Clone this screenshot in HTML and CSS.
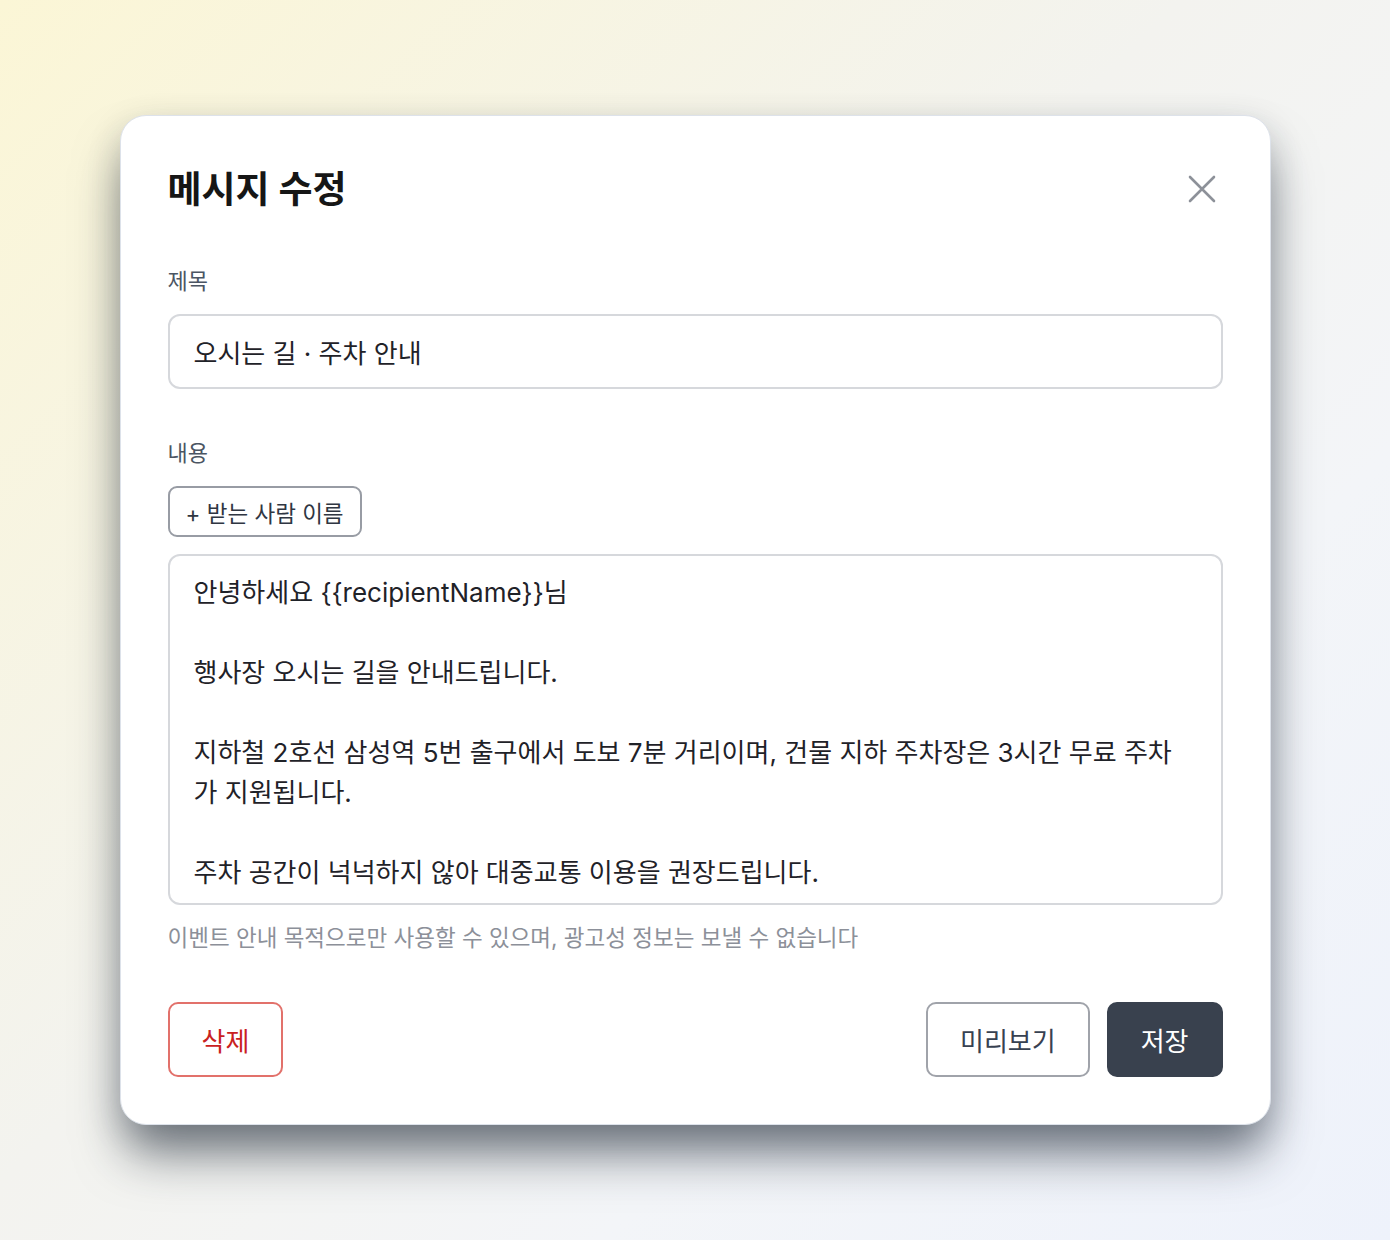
FILE: index.html
```html
<!DOCTYPE html>
<html lang="ko">
<head>
<meta charset="utf-8">
<title>메시지 수정</title>
<link rel="stylesheet" href="styles.css">
</head>
<body>
<div class="modal">
  <div class="modal-header">
    <h2 class="modal-title">메시지 수정</h2>
    <button class="close-btn" aria-label="닫기">
      <svg width="28" height="28" viewBox="0 0 28 28"><path d="M2 2 L26 26 M26 2 L2 26" stroke="#8d9199" stroke-width="2.6" stroke-linecap="round" fill="none"/></svg>
    </button>
  </div>
  <div class="field">
    <div class="label">제목</div>
    <div class="input">오시는 길 · 주차 안내</div>
  </div>
  <div class="field field-body">
    <div class="label">내용</div>
    <button class="chip-btn">+ 받는 사람 이름</button>
    <div class="textarea">안녕하세요 {{recipientName}}님

행사장 오시는 길을 안내드립니다.

지하철 2호선 삼성역 5번 출구에서 도보 7분 거리이며, 건물 지하 주차장은 3시간 무료 주차가 지원됩니다.

주차 공간이 넉넉하지 않아 대중교통 이용을 권장드립니다.</div>
    <div class="helper">이벤트 안내 목적으로만 사용할 수 있으며, 광고성 정보는 보낼 수 없습니다</div>
  </div>
  <div class="actions">
    <button class="btn btn-danger">삭제</button>
    <div class="actions-right">
      <button class="btn btn-outline">미리보기</button>
      <button class="btn btn-primary">저장</button>
    </div>
  </div>
</div>
</body>
</html>
```
FILE: styles.css
```css
* { box-sizing: border-box; }
html, body { height: 100%; }
body {
  margin: 0;
  min-height: 100vh;
  display: flex;
  align-items: center;
  justify-content: center;
  font-family: "Inter", "Noto Sans CJK KR", "Noto Sans", sans-serif;
  background: linear-gradient(135deg, #fbf6d6 0%, #f3f3ef 45%, #f3f5f8 70%, #eef2fb 100%);
  color: #1f2937;
}
.modal {
  width: 1151px;
  height: 1010px;
  background: #fff;
  border-radius: 26px;
  border: 1px solid #dde2ea;
  padding: 47px;
  box-shadow: 0 34px 50px -6px rgba(31, 41, 55, 0.6), 0 10px 34px rgba(31, 41, 55, 0.16);
  display: flex;
  flex-direction: column;
}
.modal-header {
  display: flex;
  align-items: center;
  justify-content: space-between;
  height: 50px;
}
.modal-title {
  margin: 0;
  font-size: 37px;
  line-height: 52px;
  font-weight: 700;
  color: #161616;
  margin-top: 3px;
}
.close-btn {
  width: 40px;
  height: 40px;
  padding: 0;
  border: 0;
  background: transparent;
  display: flex;
  align-items: center;
  justify-content: center;
  margin-right: 1px;
  margin-top: 2px;
}
.field { margin-top: 54px; }
.field-body { margin-top: 50px; }
.label {
  font-size: 22px;
  line-height: 28px;
  color: #4b5563;
  margin-bottom: 19px;
}
.input {
  height: 75px;
  border: 2px solid #d6d8dc;
  border-radius: 12px;
  padding: 0 24px;
  display: flex;
  align-items: center;
  font-size: 26px;
  color: #1f2228;
}
.chip-btn {
  display: block;
  height: 51px;
  padding: 0 16px;
  border: 2px solid #989ca4;
  border-radius: 9px;
  background: #fff;
  font-family: inherit;
  font-size: 22.5px;
  color: #2f3642;
  margin-bottom: 17px;
}
.textarea {
  height: 351px;
  border: 2px solid #d6d8dc;
  border-radius: 12px;
  padding: 17px 32px 15px 24px;
  font-size: 26px;
  line-height: 40px;
  color: #1f2228;
  white-space: pre-wrap;
  overflow: hidden;
}
.helper {
  margin-top: 19px;
  font-size: 22.5px;
  line-height: 28px;
  color: #8c9099;
}
.actions {
  margin-top: auto;
  display: flex;
  justify-content: space-between;
  align-items: center;
}
.actions-right {
  display: flex;
  gap: 17px;
}
.btn {
  height: 75px;
  padding: 0 32px;
  border-radius: 10px;
  font-family: inherit;
  font-size: 26px;
  background: #fff;
}
.btn-danger {
  border: 2px solid #e2716b;
  color: #c9211e;
}
.btn-outline {
  border: 2px solid #a0a3aa;
  color: #374151;
}
.btn-primary {
  border: 2px solid #39414e;
  background: #39414e;
  color: #fff;
}
```
